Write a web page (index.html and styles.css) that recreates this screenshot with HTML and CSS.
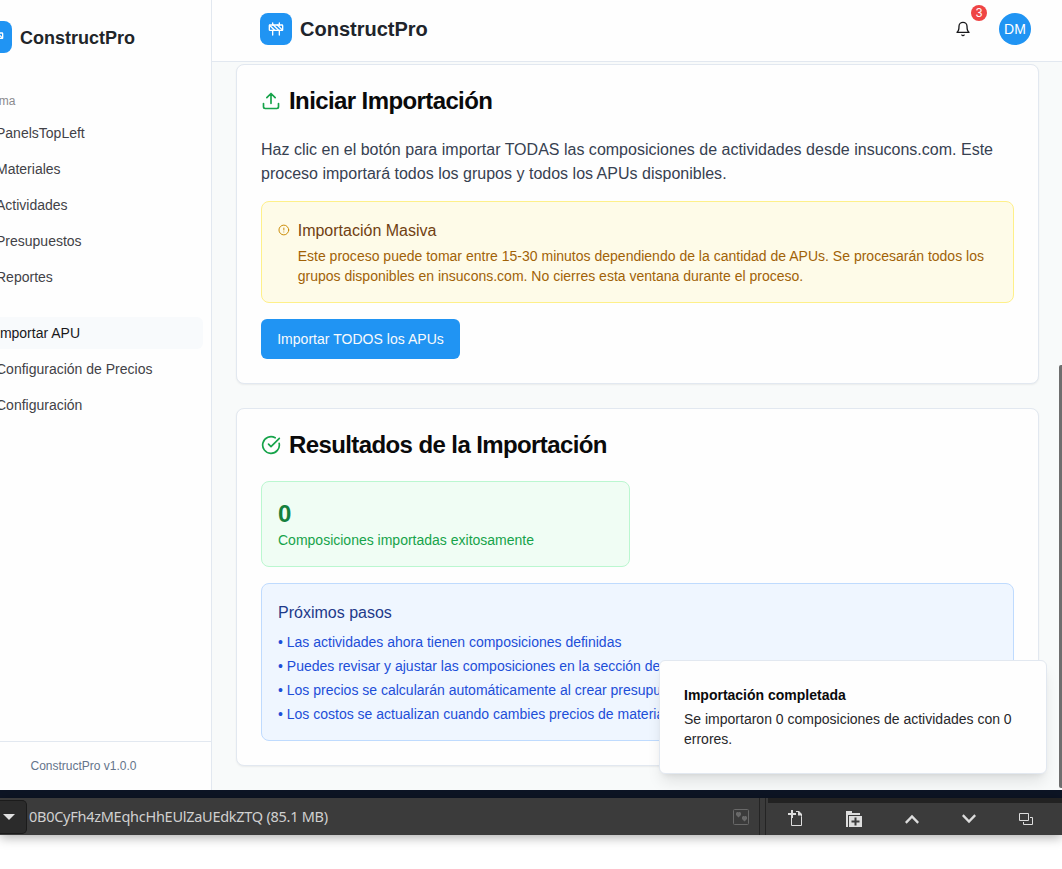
FILE: index.html
```html
<!DOCTYPE html>
<html lang="es">
<head>
<meta charset="utf-8">
<title>ConstructPro</title>
<link rel="stylesheet" href="styles.css">
</head>
<body>
<svg width="0" height="0" class="defs">
  <symbol id="construction" viewBox="0 0 24 24"><rect x="2" y="6" width="20" height="8" rx="1"/><path d="M17 14v7M7 14v7M17 3v3M7 3v3M10 14 2.3 6.3M14 6l7.7 7.7M8 6l8 8"/></symbol>
</svg>
<div class="app">
  <aside class="sidebar">
    <div class="side-brand"><span class="logo"><svg class="icon"><use href="#construction"/></svg></span><span class="side-name">ConstructPro</span></div>
    <nav class="nav">
      <div class="nav-label">Sistema</div>
      <div class="nav-group">
        <a class="nav-item">PanelsTopLeft</a>
        <a class="nav-item">Materiales</a>
        <a class="nav-item">Actividades</a>
        <a class="nav-item">Presupuestos</a>
        <a class="nav-item">Reportes</a>
      </div>
      <div class="nav-group">
        <a class="nav-item active">Importar APU</a>
        <a class="nav-item">Configuración de Precios</a>
        <a class="nav-item">Configuración</a>
      </div>
    </nav>
    <div class="side-foot">ConstructPro v1.0.0</div>
  </aside>
  <div class="page">
    <header class="topbar">
      <span class="logo"><svg class="icon"><use href="#construction"/></svg></span>
      <span class="top-name">ConstructPro</span>
      <span class="bell">
        <svg class="icon" viewBox="0 0 24 24"><path d="M6 8a6 6 0 0 1 12 0c0 7 3 9 3 9H3s3-2 3-9"/><path d="M10.3 21a1.94 1.94 0 0 0 3.4 0"/></svg>
        <span class="count">3</span>
      </span>
      <span class="avatar">DM</span>
    </header>
    <main class="main">
      <section class="card">
        <h2 class="title"><svg class="icon" viewBox="0 0 24 24"><path d="M21 15v4a2 2 0 0 1-2 2H5a2 2 0 0 1-2-2v-4M17 8l-5-5-5 5M12 3v12"/></svg>Iniciar Importación</h2>
        <p class="intro">Haz clic en el botón para importar TODAS las composiciones de actividades desde insucons.com. Este proceso importará todos los grupos y todos los APUs disponibles.</p>
        <div class="warning">
          <svg class="icon" viewBox="0 0 24 24"><circle cx="12" cy="12" r="10"/><path d="M12 8v4M12 16h.01"/></svg>
          <div>
            <div class="warning-title">Importación Masiva</div>
            <div class="warning-text">Este proceso puede tomar entre 15-30 minutos dependiendo de la cantidad de APUs. Se procesarán todos los grupos disponibles en insucons.com. No cierres esta ventana durante el proceso.</div>
          </div>
        </div>
        <button class="primary">Importar TODOS los APUs</button>
      </section>
      <section class="card">
        <h2 class="title"><svg class="icon" viewBox="0 0 24 24"><path d="M21.8 10A10 10 0 1 1 17 3.335"/><path d="m9 11 3 3L22 4"/></svg>Resultados de la Importación</h2>
        <div class="stats">
          <div class="stat"><div class="stat-value">0</div><div class="stat-label">Composiciones importadas exitosamente</div></div>
        </div>
        <div class="steps">
          <div class="steps-title">Próximos pasos</div>
          <ul class="steps-list">
            <li>• Las actividades ahora tienen composiciones definidas</li>
            <li>• Puedes revisar y ajustar las composiciones en la sección de Actividades</li>
            <li>• Los precios se calcularán automáticamente al crear presupuestos</li>
            <li>• Los costos se actualizan cuando cambies precios de materiales</li>
          </ul>
        </div>
      </section>
    </main>
  </div>
  <div class="toast">
    <div class="toast-title">Importación completada</div>
    <div class="toast-text">Se importaron 0 composiciones de actividades con 0 errores.</div>
  </div>
  <div class="scroll-thumb"></div>
</div>
<div class="strip"></div>
<footer class="dock">
  <div class="dock-left">
    <span class="dropdown"><svg width="12" height="6" viewBox="0 0 12 6"><path d="M0 0h12L6 6z" fill="#e0e0e0"/></svg></span>
    <span class="file-name">0B0CyFh4zMEqhcHhEUlZaUEdkZTQ (85.1 MB)</span>
    <svg class="hearts" width="16" height="16" viewBox="0 0 16 16"><rect x=".5" y=".5" width="15" height="15" rx="1" fill="none" stroke="#696969"/><path d="M5.500 8.500 3 6V4l1-1h1l.5.5L6 3h1l1 1v2zM11.500 12.500 9 10V8l1-1h1l.5.5.5-.5h1l1 1v2z" fill="#696969"/></svg>
  </div>
  <div class="dock-gap"></div>
  <div class="dock-right">
    <svg width="16" height="17" viewBox="0 0 16 17"><path d="M3.500 8v7.500h10v-9M8 1.500h2.500l3 3v2" fill="none" stroke="#ddd"/><path d="M10 1h1l3 3v1.500h-4zM3 0h2v3h3v2H5v3H3V5H0V3h3z" fill="#ddd"/></svg>
    <svg class="nudge" width="16" height="16" viewBox="0 0 16 16"><path d="M0 0h6v2h8v2H2v12H0zM3 5h13v11H3z" fill="#ddd"/><path d="M9.500 6.500v8M5.500 10.500h8" stroke="#3b3b3b" stroke-width="2"/></svg>
    <svg class="nudge" width="14" height="10" viewBox="0 0 14 10"><path d="m.8 8.800 6.200-6.300 6.200 6.300" fill="none" stroke="#ddd" stroke-width="2.400"/></svg>
    <svg width="14" height="10" viewBox="0 0 14 10"><path d="M.8 1.200 7 7.500l6.200-6.300" fill="none" stroke="#ddd" stroke-width="2.400"/></svg>
    <svg width="14" height="12" viewBox="0 0 14 12"><path d="M.5.5h9v7h-9zM11 4.500h2.500v7h-9V9" fill="none" stroke="#ddd"/></svg>
  </div>
</footer>
</body>
</html>
```
FILE: styles.css
```css
* { box-sizing: border-box; }
body {
  margin: 0;
  height: 869px;
  overflow: hidden;
  background: #fff;
  font-family: "Liberation Sans", Arial, sans-serif;
  font-size: 14px;
  line-height: 20px;
  color: #0a0a0b;
}
h2, p, ul { margin: 0; padding: 0; }
.defs { position: absolute; }
.icon {
  width: 16px;
  height: 16px;
  flex: none;
  fill: none;
  stroke: currentColor;
  stroke-width: 2;
  stroke-linecap: round;
  stroke-linejoin: round;
}
.app {
  position: relative;
  display: flex;
  height: 790px;
  overflow: hidden;
  background: #f8fafa;
}

/* Sidebar */
.sidebar {
  display: flex;
  flex-direction: column;
  flex: none;
  width: 256px;
  margin-left: -44px;
  border-right: 1px solid #e2e8f0;
  background: #fefefe;
}
.side-brand { display: flex; align-items: center; gap: 8px; padding: 21px 24px 24px; }
.logo {
  display: flex;
  align-items: center;
  justify-content: center;
  flex: none;
  width: 32px;
  height: 32px;
  border-radius: 8px;
  background: #2094f3;
  color: #fff;
}
.side-name { padding-top: 2px; font-size: 18px; font-weight: 700; color: #212529; }
.nav { flex: 1; padding: 8px 8px 0; }
.nav-label { height: 32px; padding: 0 8px; font-size: 12px; line-height: 32px; color: #8b8b8e; }
.nav-group { display: grid; gap: 4px; margin-bottom: 24px; }
.nav-item { height: 32px; padding-left: 32px; border-radius: 6px; line-height: 32px; color: #424247; }
.active { background: #f8fafc; color: #18181b; }
.side-foot {
  height: 49px;
  border-top: 1px solid #e2e8f0;
  text-align: center;
  font-size: 12px;
  line-height: 48px;
  color: #64748b;
}

/* Header */
.page { flex: 1; min-width: 0; }
.topbar {
  display: flex;
  align-items: center;
  height: 62px;
  padding: 0 31px 4px 48px;
  border-bottom: 1px solid #e2e8f0;
  background: #fefefe;
}
.top-name { margin-left: 8px; font-size: 20px; font-weight: 700; color: #20242b; }
.bell { position: relative; display: flex; margin-left: auto; margin-right: 28px; color: #18181b; }
.count {
  position: absolute;
  left: 16px;
  top: -16px;
  width: 16px;
  height: 16px;
  border-radius: 50%;
  background: #ef4444;
  color: #fff;
  text-align: center;
  font-size: 12px;
  line-height: 16px;
}
.avatar {
  width: 32px;
  height: 32px;
  border-radius: 50%;
  background: #2094f3;
  color: #fff;
  text-align: center;
  line-height: 32px;
}

/* Content */
.main { display: grid; gap: 24px; padding: 2px 23px 24px 24px; }
.card {
  padding: 24px;
  border: 1px solid #e2e8f0;
  border-radius: 8px;
  background: #fefefe;
  box-shadow: 0 1px 2px rgba(0, 0, 0, .06);
}
.title {
  display: flex;
  align-items: center;
  gap: 8px;
  margin-bottom: 24px;
  font-size: 24px;
  font-weight: 700;
  line-height: 24px;
  letter-spacing: -.6px;
}
.title .icon { width: 20px; height: 20px; color: #16a34a; }
.intro { margin: 25px 0 15px; font-size: 16px; line-height: 24px; letter-spacing: .007px; color: #374151; }
.title:has(+ .intro) { margin-bottom: 0; }
.warning {
  display: flex;
  gap: 8px;
  margin-bottom: 16px;
  padding: 16px;
  border: 1px solid #fef08a;
  border-radius: 8px;
  background: #fefbe8;
}
.warning .icon { width: 11.700px; height: 24px; color: #ca8a04; }
.warning-title { padding-top: 1px; margin-bottom: 3px; font-size: 16px; line-height: 24px; color: #713f12; }
.warning-text { letter-spacing: .006px; color: #a16207; }
.primary {
  display: block;
  width: 199px;
  height: 40px;
  padding: 0 15px;
  border: 0;
  border-radius: 6px;
  background: #2094f3;
  color: #f8fafc;
  font: 14px/20px "Liberation Sans", Arial, sans-serif;
  letter-spacing: .03px;
  white-space: nowrap;
}
.stats { display: grid; grid-template-columns: 1fr 1fr; gap: 16px; margin-bottom: 16px; }
.stat { padding: 16px; border: 1px solid #bbf7d0; border-radius: 8px; background: #f0fdf4; }
.stat-value { font-size: 24px; font-weight: 700; line-height: 32px; color: #15803d; }
.stat-label { color: #16a34a; }
.steps { padding: 16px; border: 1px solid #bfdbfe; border-radius: 8px; background: #eff6ff; }
.steps-title { padding-top: 1px; margin-bottom: 7px; font-size: 16px; line-height: 24px; color: #1e3a8a; }
.steps-list { display: grid; gap: 4px; list-style: none; color: #1d4ed8; }

/* Overlays */
.toast {
  position: absolute;
  right: 15px;
  bottom: 16px;
  width: 388px;
  padding: 24px;
  border: 1px solid #e2e8f0;
  border-radius: 6px;
  background: #fefefe;
  box-shadow: 0 10px 15px -3px rgba(0, 0, 0, .1), 0 4px 6px -4px rgba(0, 0, 0, .1);
}
.toast-title { margin-bottom: 4px; font-weight: 700; }
.toast-text { color: #27272a; }
.scroll-thumb { position: absolute; right: 0; top: 365px; width: 3px; height: 423px; border-radius: 2px 0 0 2px; background: #6e6e6e; }

/* Desktop dock */
.strip { height: 8px; background: #0d1525; }
.dock { display: flex; height: 37px; background: #3b3b3b; box-shadow: 0 2px 12px rgba(0, 0, 0, .35); }
.dock-left { display: flex; align-items: center; width: 760px; border-right: 1px solid #242424; }
.dropdown {
  display: flex;
  align-items: center;
  justify-content: flex-end;
  width: 27px;
  height: 34px;
  margin-top: 1px;
  padding-right: 11px;
  border: 1px solid #1b1b1b;
  border-left: 0;
  border-radius: 0 5px 5px 0;
  background: #2b2b2b;
}
.file-name { margin-left: 2px; padding-bottom: 2px; font: 14.500px/20px "Noto Sans", sans-serif; letter-spacing: -.27px; color: #d0d0d0; white-space: nowrap; }
.hearts { margin-left: auto; margin-right: 10px; }
.dock-gap { width: 6px; border-right: 1px solid #242424; }
.dock-right {
  display: flex;
  flex: 1;
  align-items: center;
  justify-content: space-between;
  margin-left: 2px;
  padding: 0 29px 1px 20px;
  border-top: 5px solid #222;
}
.nudge { margin-left: -1px; margin-right: 1px; }
```
